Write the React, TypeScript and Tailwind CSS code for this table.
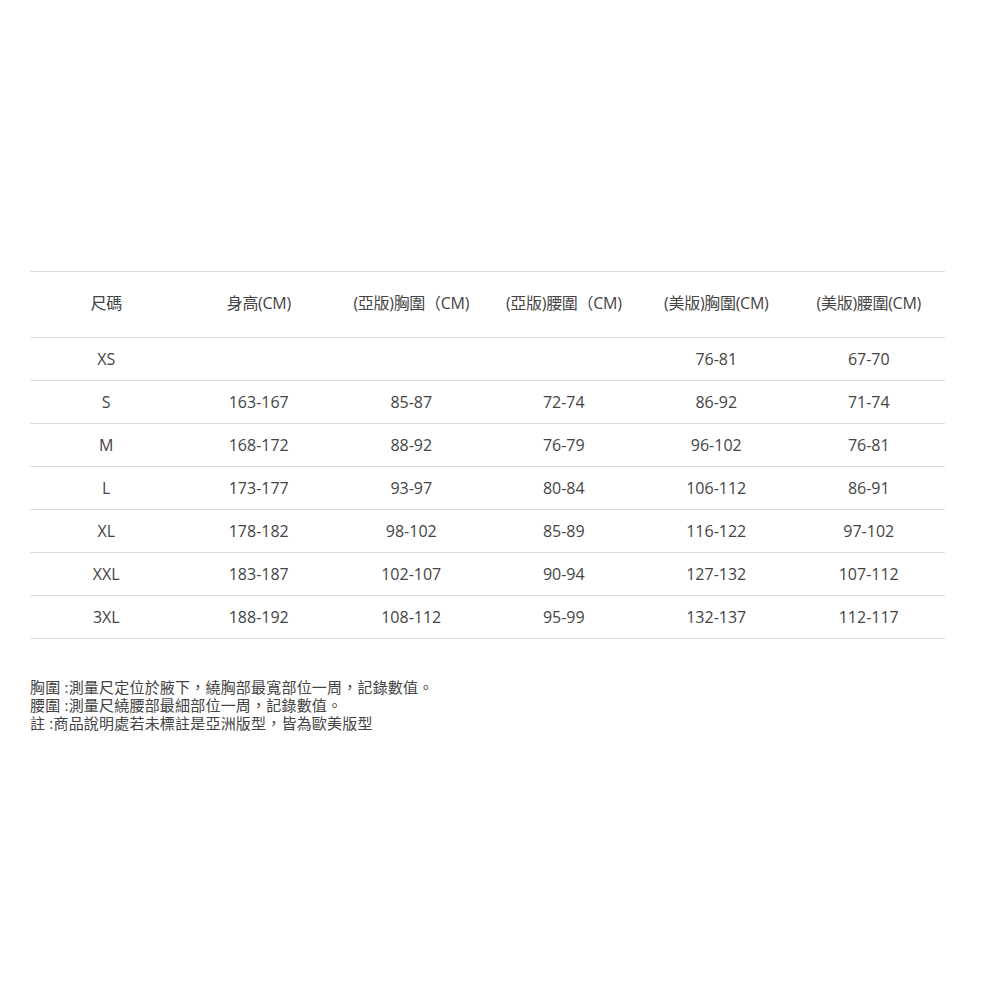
const headers = ['尺碼', '身高(CM)', '(亞版)胸圍（CM)', '(亞版)腰圍（CM)', '(美版)胸圍(CM)', '(美版)腰圍(CM)']

const rows = [
  ['XS', '', '', '', '76-81', '67-70'],
  ['S', '163-167', '85-87', '72-74', '86-92', '71-74'],
  ['M', '168-172', '88-92', '76-79', '96-102', '76-81'],
  ['L', '173-177', '93-97', '80-84', '106-112', '86-91'],
  ['XL', '178-182', '98-102', '85-89', '116-122', '97-102'],
  ['XXL', '183-187', '102-107', '90-94', '127-132', '107-112'],
  ['3XL', '188-192', '108-112', '95-99', '132-137', '112-117'],
]

export default function App() {
  return (
    <div
      className="w-[1000px] h-[1000px] bg-white text-[#444] pt-[271px] px-[30px]"
      style={{ fontFamily: '"Open Sans", "Noto Sans CJK TC", sans-serif' }}
    >
      <table className="w-[915px] border-collapse table-fixed">
        <thead>
          <tr className="h-[66px] border-t border-b border-[#dcdcdc]">
            {headers.map((h) => (
              <th key={h} className="font-normal text-[16px] text-center tracking-[-0.3px] pb-[4px]">
                {h}
              </th>
            ))}
          </tr>
        </thead>
        <tbody>
          {rows.map((r) => (
            <tr key={r[0]} className="h-[43px] border-b border-[#dcdcdc]">
              {r.map((c, i) => (
                <td key={i} className="text-[16px] text-center">
                  {c}
                </td>
              ))}
            </tr>
          ))}
        </tbody>
      </table>
      <div className="mt-[39px] text-[15px] leading-[18px] text-[#444] tracking-[0.2px]">
        <p>胸圍 :測量尺定位於腋下，繞胸部最寬部位一周，記錄數值。</p>
        <p>腰圍 :測量尺繞腰部最細部位一周，記錄數值。</p>
        <p>註 :商品說明處若未標註是亞洲版型，皆為歐美版型</p>
      </div>
    </div>
  )
}
